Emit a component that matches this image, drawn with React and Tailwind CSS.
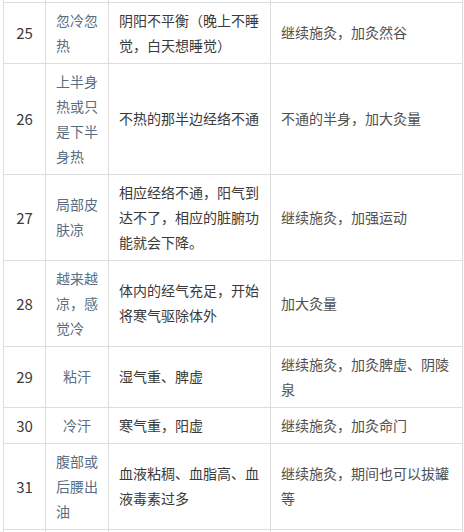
import React from "react";

const rows = [
  {
    n: "25",
    name: "忽冷忽热",
    cause: "阴阳不平衡（晚上不睡觉，白天想睡觉）",
    fix: "继续施灸，加灸然谷",
  },
  {
    n: "26",
    name: "上半身热或只是下半身热",
    cause: "不热的那半边经络不通",
    fix: "不通的半身，加大灸量",
  },
  {
    n: "27",
    name: "局部皮肤凉",
    cause: "相应经络不通，阳气到达不了，相应的脏腑功能就会下降。",
    fix: "继续施灸，加强运动",
  },
  {
    n: "28",
    name: "越来越凉，感觉冷",
    cause: "体内的经气充足，开始将寒气驱除体外",
    fix: "加大灸量",
  },
  {
    n: "29",
    name: "粘汗",
    cause: "湿气重、脾虚",
    fix: "继续施灸，加灸脾虚、阴陵泉",
  },
  {
    n: "30",
    name: "冷汗",
    cause: "寒气重，阳虚",
    fix: "继续施灸，加灸命门",
  },
  {
    n: "31",
    name: "腹部或后腰出油",
    cause: "血液粘稠、血脂高、血液毒素过多",
    fix: "继续施灸，期间也可以拔罐等",
  },
];

const cell = "border border-[#dddddd] px-[10px] py-[5px] align-middle break-all";

export default function App() {
  return (
    <div
      className="w-[464px] h-[532px] overflow-hidden bg-white pl-[3px]"
      style={{ fontFamily: '"Noto Sans CJK SC", "Noto Sans", sans-serif' }}
    >
      <table className="table-fixed border-collapse w-[459px] text-[14px] leading-[25px]">
        <colgroup>
          <col className="w-[42px]" />
          <col className="w-[63px]" />
          <col className="w-[162px]" />
          <col className="w-[192px]" />
        </colgroup>
        <tbody>
          <tr className="h-[2px]">
            <td className="border-x border-b border-[#dddddd] p-0 h-[2px]"></td>
            <td className="border-x border-b border-[#dddddd] p-0 h-[2px]"></td>
            <td className="border-x border-b border-[#dddddd] p-0 h-[2px]"></td>
            <td className="border-x border-b border-[#dddddd] p-0 h-[2px]"></td>
          </tr>
          {rows.map((r) => (
            <tr key={r.n}>
              <td className={`${cell} text-center text-[#3a3a3a] text-[15px] px-0`}>{r.n}</td>
              <td className={`${cell} text-center text-[#5a6d82]`}>
                <span className="inline-block text-left">{r.name}</span>
              </td>
              <td className={`${cell} text-[#3a3a3a]`}>{r.cause}</td>
              <td className={`${cell} text-[#505050]`}>{r.fix}</td>
            </tr>
          ))}
          <tr className="h-[20px]">
            <td className="border-x border-t border-[#dddddd]"></td>
            <td className="border-x border-t border-[#dddddd]"></td>
            <td className="border-x border-t border-[#dddddd]"></td>
            <td className="border-x border-t border-[#dddddd]"></td>
          </tr>
        </tbody>
      </table>
    </div>
  );
}
